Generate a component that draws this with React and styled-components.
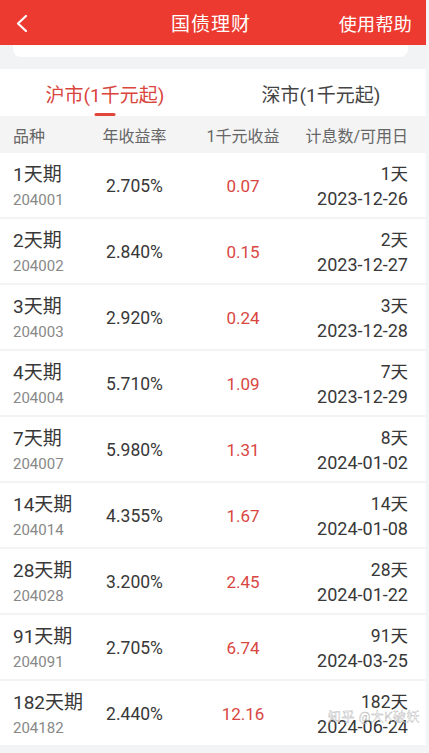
import React, {useState} from "react";
import styled, {createGlobalStyle} from "styled-components";

const GlobalStyle = createGlobalStyle`
  body {
    margin: 0;
    background: #f3f4f6;
    font-family: Roboto, "Noto Sans CJK SC", sans-serif;
  }
`

const Page = styled.div`
  width: 426px;
  background: #ffffff;
`

const NavBar = styled.div`
  height: 45px;
  background: #ec3a30;
  display: grid;
  grid-template-columns: 1fr auto 1fr;
  align-items: center;
  color: #fff;
`

const BackBtn = styled.div`
  padding-left: 14px;
  display: flex;
  align-items: center;
`

const Title = styled.div`
  font-size: 19px;
  letter-spacing: 1px;
  margin-left: -4px;
`

const Help = styled.div`
  justify-self: end;
  padding-right: 14px;
  font-size: 18px;
  letter-spacing: 0.3px;
`

const Strip = styled.div`
  height: 24px;
  background: #f2f3f5;
`

const StripCard = styled.div`
  height: 12px;
  margin: 0 18px 0 13px;
  background: #fff;
  border-radius: 0 0 8px 8px;
`

const Tabs = styled.div`
  height: 47px;
  display: flex;
  background: #fff;
`

const Tab = styled.div`
  flex: 1;
  position: relative;
  display: flex;
  justify-content: center;
  padding-top: 11px;
  padding-right: ${p => (p.$active ? "6px" : "0")};
  font-size: 19px;
  color: ${p => (p.$active ? "#d9443c" : "#444")};

  &::after {
    content: "";
    display: ${p => (p.$active ? "block" : "none")};
    position: absolute;
    bottom: 0;
    left: 50%;
    transform: translateX(-50%);
    margin-left: -3px;
    width: 21px;
    height: 3px;
    border-radius: 2px;
    background: #e0443a;
  }
`

const Grid = styled.div`
  display: grid;
  grid-template-columns: 89px 103px 97px 1fr;
  padding: 0 18px 0 13px;
  align-items: center;
`

const HeadRow = styled(Grid)`
  height: 37px;
  background: #f4f4f5;
  color: #666;
  font-size: 16px;
`

const Row = styled(Grid)`
  position: relative;
  height: 64px;
  border-bottom: 2px solid #f3f3f4;
  background: #fff;
`

const Stack = styled.div`
  display: flex;
  flex-direction: column;
  align-items: ${p => (p.$right ? "flex-end" : "flex-start")};
  gap: 3px;
  padding-top: 2px;
`

const Name = styled.div`
  font-size: 19px;
  line-height: 24px;
  color: #383838;
`

const Code = styled.div`
  font-size: 15px;
  line-height: 20px;
  color: #888;
`

const Cell = styled.div`
  width: ${p => p.$w || "auto"};
  text-align: ${p => p.$align || "left"};
  justify-self: ${p => (p.$align === "right" ? "end" : "start")};
`

const Rate = styled(Cell)`
  font-size: 17.5px;
  color: #383838;
  padding-top: 2px;
`

const Income = styled(Cell)`
  font-size: 17px;
  color: #d8463f;
  padding-top: 2px;
`

const Days = styled.div`
  font-size: 17.5px;
  line-height: 22px;
  color: #383838;
`

const DateText = styled.div`
  font-size: 18px;
  line-height: 22px;
  color: #383838;
`

const Watermark = styled.div`
  position: absolute;
  right: 6px;
  bottom: 20px;
  font-size: 13px;
  color: rgba(255, 255, 255, 0.75);
  -webkit-text-stroke: 0.4px rgba(120, 120, 120, 0.6);
  letter-spacing: 0.5px;
`

const items = [
    {name: "1天期", code: "204001", rate: "2.705%", income: "0.07", days: "1天", date: "2023-12-26"},
    {name: "2天期", code: "204002", rate: "2.840%", income: "0.15", days: "2天", date: "2023-12-27"},
    {name: "3天期", code: "204003", rate: "2.920%", income: "0.24", days: "3天", date: "2023-12-28"},
    {name: "4天期", code: "204004", rate: "5.710%", income: "1.09", days: "7天", date: "2023-12-29"},
    {name: "7天期", code: "204007", rate: "5.980%", income: "1.31", days: "8天", date: "2024-01-02"},
    {name: "14天期", code: "204014", rate: "4.355%", income: "1.67", days: "14天", date: "2024-01-08"},
    {name: "28天期", code: "204028", rate: "3.200%", income: "2.45", days: "28天", date: "2024-01-22"},
    {name: "91天期", code: "204091", rate: "2.705%", income: "6.74", days: "91天", date: "2024-03-25"},
    {name: "182天期", code: "204182", rate: "2.440%", income: "12.16", days: "182天", date: "2024-06-24"},
]

function BackIcon() {
    return (
        <svg width="16" height="20" viewBox="0 0 16 20">
            <polyline points="12,3 4,10.5 12,18" fill="none" stroke="#fff" strokeWidth="2.2"
                      strokeLinecap="round" strokeLinejoin="round"/>
        </svg>
    )
}

export default function App() {
    const [tab, setTab] = useState(0)

    return (
        <>
            <GlobalStyle/>
            <Page>
                <NavBar>
                    <BackBtn><BackIcon/></BackBtn>
                    <Title>国债理财</Title>
                    <Help>使用帮助</Help>
                </NavBar>
                <Strip><StripCard/></Strip>
                <Tabs>
                    <Tab $active={tab === 0} onClick={() => setTab(0)}>沪市(1千元起)</Tab>
                    <Tab $active={tab === 1} onClick={() => setTab(1)}>深市(1千元起)</Tab>
                </Tabs>
                <HeadRow>
                    <Cell>品种</Cell>
                    <Cell $w="65px" $align="center">年收益率</Cell>
                    <Cell $w="76px" $align="center">1千元收益</Cell>
                    <Cell $align="right">计息数/可用日</Cell>
                </HeadRow>
                {items.map((item, i) => (
                    <Row key={item.code}>
                        <Stack>
                            <Name>{item.name}</Name>
                            <Code>{item.code}</Code>
                        </Stack>
                        <Rate $w="65px" $align="center">{item.rate}</Rate>
                        <Income $w="76px" $align="center">{item.income}</Income>
                        <Stack $right>
                            <Days>{item.days}</Days>
                            <DateText>{item.date}</DateText>
                        </Stack>
                        {i === items.length - 1 && <Watermark>知乎 @大K破妖</Watermark>}
                    </Row>
                ))}
            </Page>
        </>
    )
}
